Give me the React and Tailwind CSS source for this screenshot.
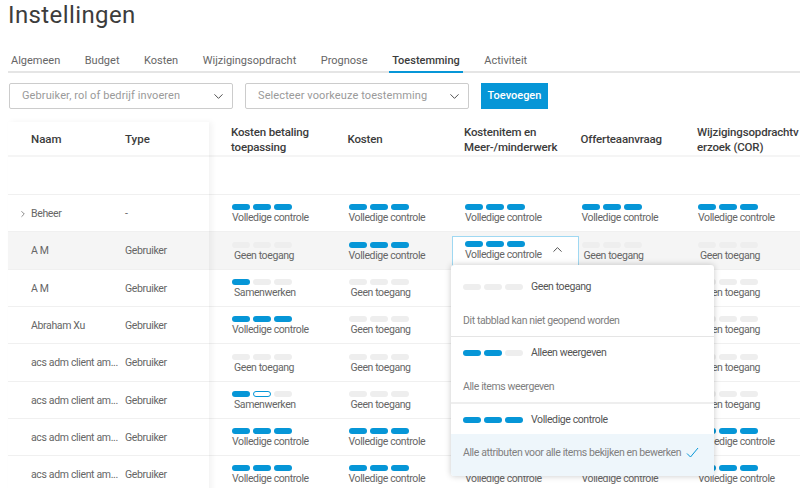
import React from 'react';
import { ChevronDown, ChevronRight, ChevronUp } from 'lucide-react';

const TABS = ['Algemeen', 'Budget', 'Kosten', 'Wijzigingsopdracht', 'Prognose', 'Toestemming', 'Activiteit'];

const LEVELS = {
  V: { label: 'Volledige controle', bars: ['on', 'on', 'on'] },
  G: { label: 'Geen toegang', bars: ['off', 'off', 'off'] },
  S: { label: 'Samenwerken', bars: ['on', 'off', 'off'] },
  H: { label: 'Samenwerken', bars: ['on', 'half', 'off'] },
};

const COLUMNS = [
  ['Kosten betaling', 'toepassing'],
  ['Kosten'],
  ['Kostenitem en', 'Meer-/minderwerk'],
  ['Offerteaanvraag'],
  ['Wijzigingsopdrachtv', 'erzoek (COR)'],
];

const ROWS = [
  { name: 'Beheer', type: '-', group: true, cells: 'VVVVV', h: 'h-[37px]' },
  { name: 'A M', type: 'Gebruiker', active: true, cells: 'GVVGG', h: 'h-[38px]' },
  { name: 'A M', type: 'Gebruiker', cells: 'SGGGG', h: 'h-[37px]' },
  { name: 'Abraham Xu', type: 'Gebruiker', cells: 'VGGGG', h: 'h-[37px]' },
  { name: 'acs adm client am...', type: 'Gebruiker', cells: 'GGGGG', h: 'h-[38px]' },
  { name: 'acs adm client am...', type: 'Gebruiker', cells: 'HGGGG', h: 'h-[37px]' },
  { name: 'acs adm client am...', type: 'Gebruiker', cells: 'VVVVV', h: 'h-[37px]' },
  { name: 'acs adm client am...', type: 'Gebruiker', cells: 'VVVVV', h: 'h-[37px]' },
];

const Bars = ({ bars }) => (
  <div className="flex gap-[3px]">
    {bars.map((b, i) => (
      <span
        key={i}
        className={`block w-[18px] h-[6px] rounded-full ${
          b === 'on'
            ? 'bg-[#0696d7]'
            : b === 'half'
            ? 'bg-white border border-[#0696d7]'
            : 'bg-[#eeeeee]'
        }`}
      />
    ))}
  </div>
);

const Level = ({ code }) => {
  const level = LEVELS[code];
  return (
    <div className="pt-[2px]">
      <Bars bars={level.bars} />
      <div className={`mt-[1px] text-[10.5px] leading-[13px] tracking-[-0.4px] text-[#666] whitespace-nowrap ${code === 'V' ? '' : 'pl-[2px]'}`}>
        {level.label}
      </div>
    </div>
  );
};

const Check = () => (
  <svg width="13" height="11" viewBox="0 0 13 11" fill="none" stroke="#0696d7" strokeWidth="1">
    <path d="M1 6.5 L4.5 10 L12 1" />
  </svg>
);

const OptionHead = ({ bars, label, height }) => (
  <div className={`flex items-center gap-[8px] pl-[12px] ${height}`}>
    <Bars bars={bars} />
    <span className="text-[10.5px] tracking-[-0.4px] text-[#555]">{label}</span>
  </div>
);

const Dropdown = () => (
  <div className="absolute left-[-2px] top-full w-[263px] h-[211px] bg-white rounded-[3px] shadow-[0_0_6px_rgba(0,0,0,0.22)] z-20 overflow-hidden">
    <div className="h-[72px] border-b border-[#e5e5e5]">
      <OptionHead bars={['off', 'off', 'off']} label="Geen toegang" height="h-[44px]" />
      <div className="pl-[12px] text-[10.5px] leading-[24px] tracking-[-0.4px] text-[#808080]">Dit tabblad kan niet geopend worden</div>
    </div>
    <div className="h-[67px] border-b-2 border-[#eeeeee]">
      <OptionHead bars={['on', 'on', 'off']} label="Alleen weergeven" height="h-[33px]" />
      <div className="pl-[12px] text-[10.5px] leading-[34px] tracking-[-0.4px] text-[#808080]">Alle items weergeven</div>
    </div>
    <OptionHead bars={['on', 'on', 'on']} label="Volledige controle" height="h-[30px] pt-[2px]" />
    <div className="flex items-center justify-between pl-[12px] pr-[15px] pb-[4px] h-[42px] bg-[#eef6fb] text-[10.5px] tracking-[-0.4px] text-[#808080]">
      <span className="whitespace-nowrap">Alle attributen voor alle items bekijken en bewerken</span>
      <Check />
    </div>
  </div>
);

const Select = ({ placeholder }) => (
  <div className="flex items-center justify-between w-[224px] h-[26px] pl-[12px] pr-[6px] border border-[#cccccc] rounded-[2px] bg-white">
    <span className="text-[11px] text-[#9a9a9a] tracking-[0.1px] whitespace-nowrap">{placeholder}</span>
    <ChevronDown size={15} strokeWidth={1.5} className="text-[#444]" />
  </div>
);

export default function App() {
  return (
    <div className="w-[800px] h-[488px] overflow-hidden bg-white font-['Roboto',sans-serif]">
      <div className="pl-[8px]">
        <h1 className="h-[44px] pt-[1px] text-[24px] leading-[28px] tracking-[0.4px] text-[#3c3c3c] font-normal">Instellingen</h1>

        {/* Tabs */}
        <div className="flex gap-[24.5px] h-[29px] border-b-2 border-[#e5e5e5] pl-[3px] pt-[8px]">
          {TABS.map(tab => (
            <div
              key={tab}
              className={`text-[11px] h-[21px] leading-[17px] ${
                tab === 'Toestemming'
                  ? 'font-medium text-[#3c3c3c] border-b-2 border-[#0696d7] -mx-[3px] px-[3px]'
                  : 'text-[#666]'
              }`}
            >
              {tab}
            </div>
          ))}
        </div>

        {/* Filters */}
        <div className="flex items-center gap-[12px] mt-[10px] pl-[1px]">
          <Select placeholder="Gebruiker, rol of bedrijf invoeren" />
          <Select placeholder="Selecteer voorkeuze toestemming" />
          <button className="w-[67px] h-[26px] bg-[#0696d7] text-white text-[11px] font-medium">Toevoegen</button>
        </div>

        {/* Table */}
        <div className="flex mt-[13px]">
          <div className="w-[201px] shrink-0 bg-white relative z-10 shadow-[3px_0_6px_rgba(0,0,0,0.05)]">
            <div className="flex items-center h-[35px] pt-[2px] border-b-2 border-[#f5f5f5] text-[11.5px] font-medium text-[#3c3c3c]">
              <span className="w-[117px] pl-[23px]">Naam</span>
              <span>Type</span>
            </div>
            <div className="h-[38px] border-b border-[#f0f0f0]" />
            {ROWS.map((row, i) => (
              <div
                key={i}
                className={`flex items-center ${row.h} pt-[1px] border-b border-[#f0f0f0] text-[10.5px] tracking-[-0.35px] text-[#666] ${row.active ? 'bg-[#f5f5f5]' : ''}`}
              >
                <span className="w-[117px] pl-[23px] relative whitespace-nowrap">
                  {row.group && <ChevronRight size={10} strokeWidth={1.5} className="absolute left-[10px] top-[3px] text-[#444]" />}
                  {row.name}
                </span>
                <span>{row.type}</span>
              </div>
            ))}
          </div>

          <div className="flex-1 min-w-0">
            <div className="flex items-center h-[35px] pt-[2px] pl-[22px] border-b-2 border-[#f5f5f5] text-[11.5px] leading-[15px] tracking-[-0.15px] font-medium text-[#3c3c3c]">
              {COLUMNS.map((lines, i) => (
                <div key={i} className="w-[116.5px] shrink-0 whitespace-nowrap">
                  {lines.map(line => <div key={line}>{line}</div>)}
                </div>
              ))}
            </div>
            <div className="h-[38px] border-b border-[#f0f0f0]" />
            {ROWS.map((row, i) => (
              <div
                key={i}
                className={`flex items-center ${row.h} pl-[23px] border-b border-[#f0f0f0] ${row.active ? 'bg-[#f5f5f5]' : ''}`}
              >
                {row.cells.split('').map((code, j) => (
                  <div key={j} className="w-[116.5px] shrink-0">
                    {row.active && j === 2 ? (
                      <div className="relative -ml-[13px] w-[127px] h-[30px] pl-[12px] pt-[2px] bg-white border border-[#9fd8f2]">
                        <Level code={code} />
                        <ChevronUp size={15} strokeWidth={1.5} className="absolute right-[13px] top-[5px] text-[#444]" />
                        <Dropdown />
                      </div>
                    ) : (
                      <Level code={code} />
                    )}
                  </div>
                ))}
              </div>
            ))}
          </div>
        </div>
      </div>
    </div>
  );
}
